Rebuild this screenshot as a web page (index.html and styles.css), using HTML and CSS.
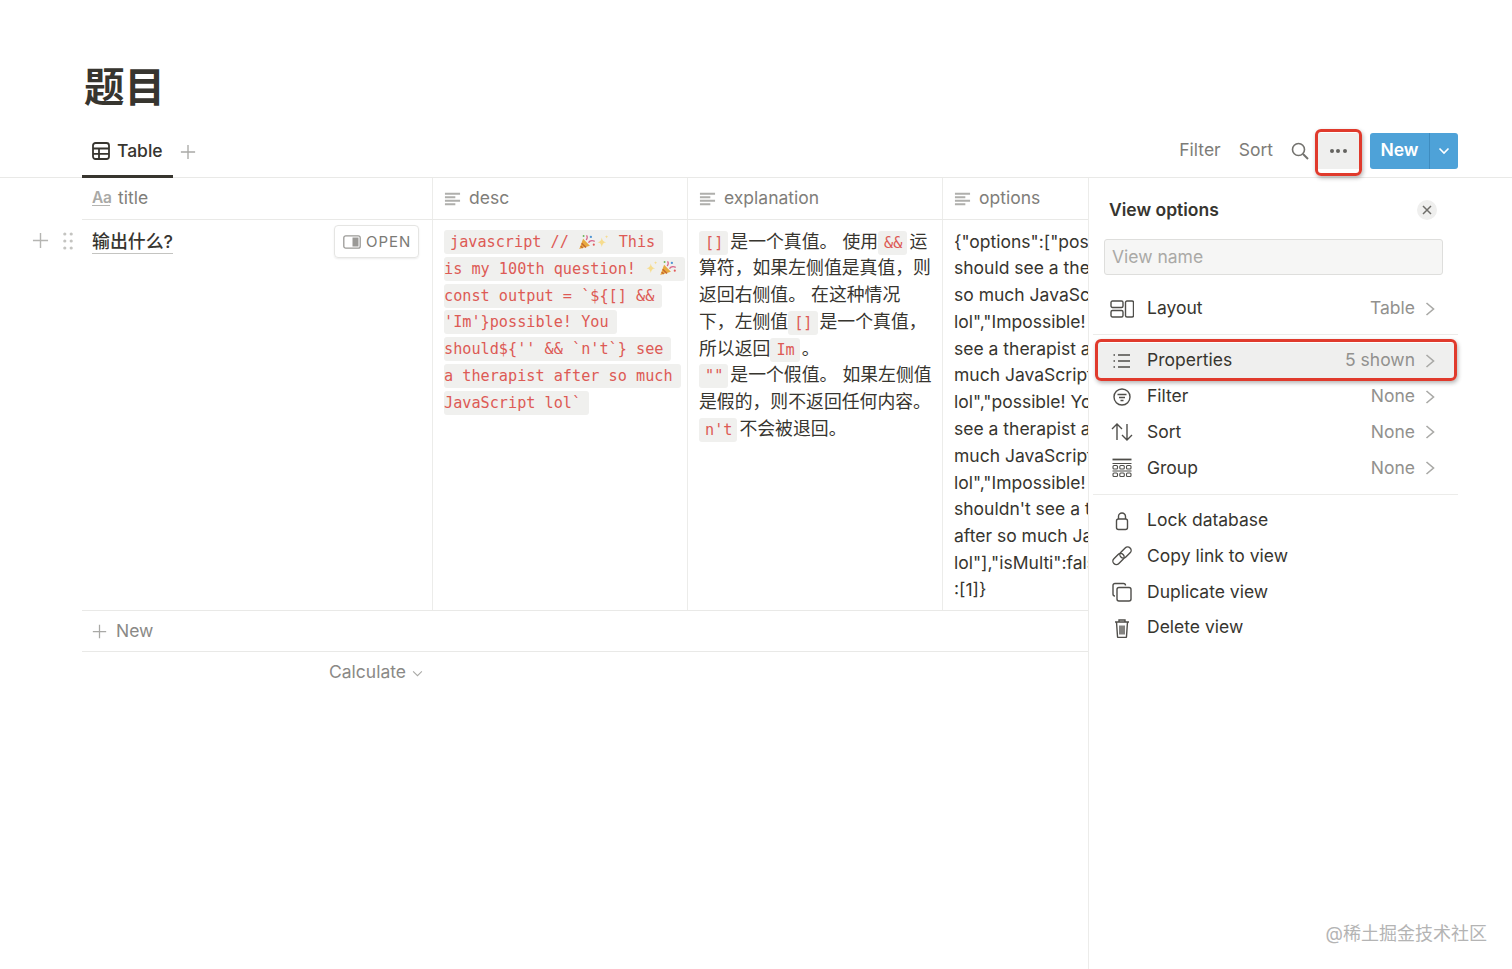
FILE: index.html
```html
<!DOCTYPE html>
<html lang="zh">
<head>
<meta charset="utf-8">
<title>题目</title>
<link rel="stylesheet" href="styles.css">
</head>
<body>
<svg class="defs" aria-hidden="true">
  <symbol id="plus" viewBox="0 0 18 18"><path d="M9 1v16M1 9h16" fill="none" stroke="currentColor" stroke-width="1.5"/></symbol>
  <symbol id="lines" viewBox="0 0 18 14"><path d="M1 1.500h16M1 5.200h11M1 8.800h16M1 12.500h11" fill="none" stroke="currentColor" stroke-width="2"/></symbol>
  <symbol id="chev" viewBox="0 0 10 14"><path d="M1.500 1 8.500 7l-7 6" fill="none" stroke="currentColor" stroke-width="1.600"/></symbol>
  <symbol id="popper" viewBox="0 0 18 16">
    <path d="M1 15.500 5 5l7 7z" fill="#e7a93f"/><path d="M3.500 9.500l4.500 4.500M2.500 12.500l2 2" stroke="#c4652f" stroke-width="1.300"/>
    <path d="M8 6c1.500-1 1.500-3 .5-4.500M10.500 9c1.500-2.500 4-2.500 6.500-1.500" fill="none" stroke="#d8648a" stroke-width="1.400"/>
    <circle cx="13" cy="3" r="1.200" fill="#4f94d4"/><circle cx="16" cy="11" r="1.100" fill="#e25b5b"/><circle cx="5.500" cy="2" r="1" fill="#6fb35c"/>
  </symbol>
  <symbol id="spark" viewBox="0 0 14 16">
    <path d="M6 3.500c.5 3 1.500 4.500 4.500 5-3 .5-4 2-4.500 5-.5-3-1.500-4.500-4.500-5 3-.5 4-2 4.500-5z" fill="#f6dc8e"/>
    <path d="M11 1c.2 1.200.6 1.600 1.800 1.800-1.200.2-1.600.6-1.800 1.800-.2-1.200-.6-1.600-1.800-1.800 1.200-.2 1.600-.6 1.800-1.800z" fill="#f6dc8e"/>
  </symbol>
</svg>

<div class="page">
  <h1 class="title">题目</h1>

  <div class="tabs">
    <div class="tab">
      <svg class="ico-tab" viewBox="0 0 18 18"><rect x="1" y="1" width="16" height="16" rx="2.500" fill="none" stroke="currentColor" stroke-width="1.800"/><path d="M1 6.500h16M1 11.800h16M7 6.500v10.500" fill="none" stroke="currentColor" stroke-width="1.800"/></svg>
      <span>Table</span>
    </div>
    <svg class="add-view"><use href="#plus"/></svg>
    <div class="toolbar">
      <span class="tool-text">Filter</span>
      <span class="tool-text">Sort</span>
      <svg class="search" viewBox="0 0 18 18"><circle cx="7.500" cy="7.500" r="6" fill="none" stroke="currentColor" stroke-width="1.600"/><path d="m12 12 5 5" stroke="currentColor" stroke-width="2"/></svg>
      <div class="more"><i></i><i></i><i></i></div>
      <div class="new-btn">
        <span class="new-label">New</span>
        <span class="new-arrow"><svg viewBox="0 0 12 8"><path d="m1.500 1.500 4.500 4.500 4.500-4.500" fill="none" stroke="currentColor" stroke-width="1.600"/></svg></span>
      </div>
    </div>
  </div>

  <div class="main">
    <div class="left">
      <div class="gutter">
        <svg class="gutter-plus"><use href="#plus"/></svg>
        <svg class="gutter-drag" viewBox="0 0 10 18" fill="currentColor"><circle cx="1.800" cy="2" r="1.600"/><circle cx="8.200" cy="2" r="1.600"/><circle cx="1.800" cy="9" r="1.600"/><circle cx="8.200" cy="9" r="1.600"/><circle cx="1.800" cy="16" r="1.600"/><circle cx="8.200" cy="16" r="1.600"/></svg>
      </div>
      <div class="table">
        <div class="grid head">
          <div class="th th-first"><span class="aa">Aa</span><span>title</span></div>
          <div class="th"><svg class="ico-lines"><use href="#lines"/></svg><span>desc</span></div>
          <div class="th"><svg class="ico-lines"><use href="#lines"/></svg><span>explanation</span></div>
          <div class="th"><svg class="ico-lines"><use href="#lines"/></svg><span>options</span></div>
        </div>
        <div class="grid row">
          <div class="td td-title">
            <span class="row-name">输出什么?</span>
            <div class="open-btn">
              <svg viewBox="0 0 18 14"><rect x=".8" y=".8" width="16.400" height="12.400" rx="2" fill="none" stroke="currentColor" stroke-width="1.300"/><rect x="9.500" y="2.500" width="6" height="9" fill="currentColor"/></svg>
              <span>OPEN</span>
            </div>
          </div>
          <div class="td desc">
            <code class="first">javascript // <svg class="emoji popper"><use href="#popper"/></svg><svg class="emoji spark"><use href="#spark"/></svg> This</code><br>
            <code>is my 100th question! <svg class="emoji spark"><use href="#spark"/></svg><svg class="emoji popper"><use href="#popper"/></svg></code><br>
            <code>const output = `${[] &amp;&amp;</code><br>
            <code>'Im'}possible! You</code><br>
            <code>should${'' &amp;&amp; `n't`} see</code><br>
            <code>a therapist after so much</code><br>
            <code>JavaScript lol`</code>
          </div>
          <div class="td expl">
            <code>[]</code>是一个真值。 使用<code>&amp;&amp;</code>运<br>
            算符，如果左侧值是真值，则<br>
            返回右侧值。 在这种情况<br>
            下，左侧值<code>[]</code>是一个真值，<br>
            所以返回<code>Im</code>。<br>
            <code>""</code>是一个假值。 如果左侧值<br>
            是假的，则不返回任何内容。<br>
            <code>n't</code>不会被退回。
          </div>
          <div class="td opts">
            <div>{"options":["possible! You</div>
            <div>should see a therapist after</div>
            <div>so much JavaScript</div>
            <div>lol","Impossible! You</div>
            <div>see a therapist after so</div>
            <div>much JavaScript</div>
            <div>lol","possible! You shouldn't</div>
            <div>see a therapist after so</div>
            <div>much JavaScript</div>
            <div>lol","Impossible! You</div>
            <div>shouldn't see a therapist</div>
            <div>after so much JavaScript</div>
            <div>lol"],"isMulti":false,"answer"</div>
            <div>:[1]}</div>
          </div>
        </div>
        <div class="add-row"><svg><use href="#plus"/></svg><span>New</span></div>
        <div class="calc"><span>Calculate</span><svg viewBox="0 0 12 8"><path d="m1 1.500 5 5 5-5" fill="none" stroke="currentColor" stroke-width="1.200"/></svg></div>
      </div>
    </div>

    <aside class="panel">
      <div class="panel-head">
        <span class="panel-title">View options</span>
        <span class="close"><svg viewBox="0 0 10 10"><path d="m1 1 8 8M9 1 1 9" stroke="currentColor" stroke-width="1.500"/></svg></span>
      </div>
      <div class="name-input">View name</div>

      <div class="menu">
        <div class="item">
          <svg class="ico" viewBox="0 0 24 18"><rect x="1" y="1" width="12" height="6.500" rx="1.500"/><rect x="1" y="10.500" width="12" height="6.500" rx="1.500"/><rect x="15.500" y="1" width="8" height="16" rx="1.500"/></svg>
          <span class="label">Layout</span><span class="value">Table</span><svg class="chev"><use href="#chev"/></svg>
        </div>
      </div>
      <hr class="sep sep-first">
      <div class="menu">
        <div class="item active">
          <svg class="ico" viewBox="0 0 24 18"><path d="M8 3h12M8 9h12M8 15h12"/><path d="M3.500 3h1.500M3.500 9h1.500M3.500 15h1.500"/></svg>
          <span class="label">Properties</span><span class="value">5 shown</span><svg class="chev"><use href="#chev"/></svg>
        </div>
        <div class="item">
          <svg class="ico" viewBox="0 0 24 18"><circle cx="12" cy="9" r="8"/><path d="M7.500 6.500h9M9 9.500h6M10.500 12.500h3"/></svg>
          <span class="label">Filter</span><span class="value">None</span><svg class="chev"><use href="#chev"/></svg>
        </div>
        <div class="item">
          <svg class="ico" viewBox="0 0 24 20"><path d="M7 18V2M2 7l5-5 5 5M17 2v16M12 13l5 5 5-5"/></svg>
          <span class="label">Sort</span><span class="value">None</span><svg class="chev"><use href="#chev"/></svg>
        </div>
        <div class="item">
          <svg class="ico thin" viewBox="0 0 24 20"><path d="M2.500 1.500h19" stroke-width="1.800"/><path d="M2.500 5.500h19" stroke-width="1"/><rect x="3" y="7.500" width="4.500" height="3.500" rx="1"/><rect x="9.800" y="7.500" width="4.500" height="3.500" rx="1"/><rect x="16.500" y="7.500" width="4.500" height="3.500" rx="1"/><path d="M2.500 13h19" stroke-width="1"/><rect x="3" y="15" width="4.500" height="3.500" rx="1"/><rect x="9.800" y="15" width="4.500" height="3.500" rx="1"/><rect x="16.500" y="15" width="4.500" height="3.500" rx="1"/></svg>
          <span class="label">Group</span>
          <span class="value">None</span><svg class="chev"><use href="#chev"/></svg>
        </div>
      </div>
      <hr class="sep">
      <div class="menu">
        <div class="item">
          <svg class="ico" viewBox="0 0 24 20"><rect x="6.500" y="8" width="11" height="10.500" rx="2"/><path d="M8.500 8V5.500a3.500 3.500 0 0 1 7 0V8"/></svg>
          <span class="label">Lock database</span>
        </div>
        <div class="item">
          <svg class="ico" viewBox="0 0 24 20"><rect x="-6.500" y="-3.500" width="13" height="7" rx="3.500" transform="translate(8.500 13) rotate(-45)"/><rect x="-6.500" y="-3.500" width="13" height="7" rx="3.500" transform="translate(15.500 6.500) rotate(-45)"/></svg>
          <span class="label">Copy link to view</span>
        </div>
        <div class="item">
          <svg class="ico" viewBox="0 0 24 20"><path d="M5 14a2 2 0 0 1-2-2V3.500a2 2 0 0 1 2-2h8.500a2 2 0 0 1 2 2"/><rect x="7" y="5.500" width="14" height="13.500" rx="2"/></svg>
          <span class="label">Duplicate view</span>
        </div>
        <div class="item">
          <svg class="ico" viewBox="0 0 24 20"><path d="M5 4h14M9 4V2h6v2M6.500 4l1 14.500a1 1 0 0 0 1 1h7a1 1 0 0 0 1-1l1-14.500M10 7.500v9M12 7.500v9M14 7.500v9"/></svg>
          <span class="label">Delete view</span>
        </div>
      </div>
    </aside>
  </div>
</div>

<div class="callout callout-more"></div>
<div class="callout callout-props"></div>
<div class="watermark">@稀土掘金技术社区</div>
</body>
</html>
```

FILE: styles.css
```css
* { box-sizing: border-box; }
html, body { margin: 0; height: 100%; }
body {
  position: relative;
  width: 1512px;
  height: 969px;
  overflow: hidden;
  background: #fff;
  color: #37352f;
  font-family: Inter, "Noto Sans CJK SC", sans-serif;
  font-size: 17.500px;
  line-height: 26.800px;
}
.defs { position: absolute; width: 0; height: 0; }
.page { display: flex; flex-direction: column; height: 100%; }

.title {
  margin: 0;
  padding: 59px 0 0 84px;
  height: 133px;
  font-size: 40.500px;
  line-height: 58px;
  font-weight: 700;
}

.tabs {
  display: flex;
  align-items: center;
  height: 45px;
  padding: 0 54px 0 82px;
  border-bottom: 1px solid #e9e9e7;
  flex: none;
}
.tab {
  display: flex;
  align-items: center;
  gap: 7px;
  width: 91px;
  height: 44px;
  padding: 0 0 5px 10px;
  border-bottom: 3px solid #37352f;
  margin-bottom: -1px;
  font-weight: 500;
}
.ico-tab { width: 18px; height: 18px; margin-top: -2px; }
.add-view { width: 16px; height: 16px; margin-left: 7px; color: #a9a9a6; margin-top: -7px; }
.toolbar { display: flex; align-items: center; margin-left: auto; height: 36px; margin-top: -9px; }
.tool-text { color: #7d7c78; margin-right: 18px; }
.search { width: 18px; height: 18px; color: #73726e; margin-right: 6px; }
.more {
  width: 46px;
  height: 36px;
  margin-right: 9px;
  display: flex;
  align-items: center;
  justify-content: center;
  gap: 2.500px;
  background: #efefee;
}
.more i { width: 4px; height: 4px; border-radius: 50%; background: #64635f; }
.new-btn {
  display: flex;
  width: 88px;
  height: 36px;
  border-radius: 3px;
  background: #4ea2d8;
  color: #fff;
  font-weight: 600;
  overflow: hidden;
}
.new-label { width: 59px; text-align: center; line-height: 34px; }
.new-arrow {
  flex: 1;
  display: flex;
  align-items: center;
  justify-content: center;
  border-left: 1px solid #3e8cc0;
}
.new-arrow svg { width: 12px; height: 8px; }

.main { display: flex; flex: 1; min-height: 0; }
.left { display: flex; width: 1088px; flex: none; overflow: hidden; }
.gutter {
  flex: none;
  width: 82px;
  display: flex;
  align-items: flex-start;
  gap: 14px;
  padding: 54px 0 0 32px;
}
.gutter-plus { width: 17px; height: 17px; color: #b5b5b2; }
.gutter-drag { width: 10px; height: 18px; color: #c4c4c1; }
.table { width: 1006px; flex: none; }
.grid { display: grid; grid-template-columns: 351px 255px 255px 255px; width: 1116px; }
.head { height: 42px; border-bottom: 1px solid #e9e9e7; }
.th {
  display: flex;
  align-items: center;
  gap: 8px;
  padding-left: 11px;
  color: #7f7e7a;
  border-right: 1px solid #ececea;
}
.th-first { padding-left: 10px; }
.aa {
  width: 18px;
  color: #a9a9a6;
  font-size: 15.500px;
  line-height: 15px;
  font-weight: 600;
  border-bottom: 1.500px solid #b5b5b2;
  letter-spacing: -.4px;
  margin-top: -1px;
}
.ico-lines { width: 17px; height: 14px; color: #afafac; }
.row { height: 391px; border-bottom: 1px solid #e9e9e7; }
.td {
  padding: 8.500px 11px 8px;
  border-right: 1px solid #ececea;
  overflow: hidden;
}
.td-title { display: flex; align-items: flex-start; justify-content: space-between; padding: 8px 13px 8px 10px; }
.row-name { font-size: 17.900px; font-weight: 500; height: 26px; border-bottom: 1px solid #c4c4c1; line-height: 27px; }
.open-btn {
  display: flex;
  align-items: center;
  gap: 5px;
  width: 85px;
  height: 33px;
  margin-top: -3px;
  padding: 1px 0 0 8px;
  border: 1px solid #e5e5e3;
  border-radius: 4px;
  box-shadow: 0 1px 2px rgba(15, 15, 15, .08);
  color: #7b7a76;
  font-size: 15px;
  letter-spacing: 1px;
}
.open-btn svg { width: 18px; height: 14px; color: #9b9a97; margin-top: -1px; }
code {
  font-family: "DejaVu Sans Mono", "Liberation Mono", monospace;
  font-size: 15.200px;
  line-height: 1;
  color: #dd5a55;
  background: #f0f0ee;
  border-radius: 3px;
  padding: 3px 5px 3px 6px;
}
.desc { white-space: nowrap; padding-top: 8px; }
.desc code { padding: 3px 8px 3px 0; }
.desc code.first { padding-left: 6px; }
.emoji { height: 15.500px; vertical-align: -2px; }
.popper { width: 18px; }
.spark { width: 13.500px; }
.expl { font-size: 17.850px; white-space: nowrap; }
.expl code { margin-right: 2px; }
.opts { white-space: nowrap; }
.add-row {
  display: flex;
  align-items: center;
  gap: 9px;
  height: 41px;
  padding-left: 10px;
  border-bottom: 1px solid #e9e9e7;
  color: #8a8986;
}
.add-row svg { width: 15px; height: 15px; color: #a9a9a6; }
.calc {
  display: flex;
  align-items: center;
  justify-content: flex-end;
  gap: 6px;
  width: 341px;
  height: 40px;
  color: #8a8986;
}
.calc svg { width: 11px; height: 7px; color: #a9a9a6; margin-top: 2px; }

.panel {
  flex: 1;
  border-left: 1px solid #ececea;
  padding: 0 54px 0 4px;
}
.panel-head {
  display: flex;
  align-items: center;
  justify-content: space-between;
  height: 61px;
  padding: 3px 21px 0 16px;
}
.panel-title { font-weight: 600; }
.close {
  display: flex;
  align-items: center;
  justify-content: center;
  width: 20px;
  height: 20px;
  border-radius: 50%;
  background: #efefee;
  color: #6f6e6a;
}
.close svg { width: 10px; height: 10px; }
.name-input {
  width: 339px;
  height: 36px;
  margin-left: 11px;
  padding-left: 7px;
  line-height: 34px;
  background: #f6f6f5;
  border: 1px solid #dededc;
  border-radius: 3px;
  color: #aaa9a6;
}
.name-input + .menu { margin-top: 16px; }
.menu { padding: 0 3px; }
.item {
  display: flex;
  align-items: center;
  height: 35.700px;
  padding: 0 20px 0 14px;
}
.item.active { background: #efefee; height: 36px; }
.ico {
  width: 24px;
  height: 20px;
  margin-right: 13px;
  fill: none;
  stroke: #4f4e4a;
  stroke-width: 1.400;
  flex: none;
}
.ico.thin { stroke-width: 1.100; }
.label { flex: 1; }
.value { color: #92918e; }
.chev { width: 10px; height: 14px; margin-left: 10px; color: #a9a9a6; }
.sep { margin: 8px 0; border: 0; border-top: 1px solid #ececea; }
.sep-first { margin-top: 7px; }

.callout {
  position: absolute;
  border: 3.500px solid #e03a2c;
  border-radius: 6px;
  box-shadow: 1px 2px 4px rgba(0, 0, 0, .3);
}
.callout-more { left: 1315px; top: 129px; width: 47px; height: 47px; }
.callout-props { left: 1095px; top: 339px; width: 362px; height: 42px; }
.watermark {
  position: absolute;
  right: 25px;
  top: 921px;
  font-size: 18px;
  color: #b4b4b4;
}
```
